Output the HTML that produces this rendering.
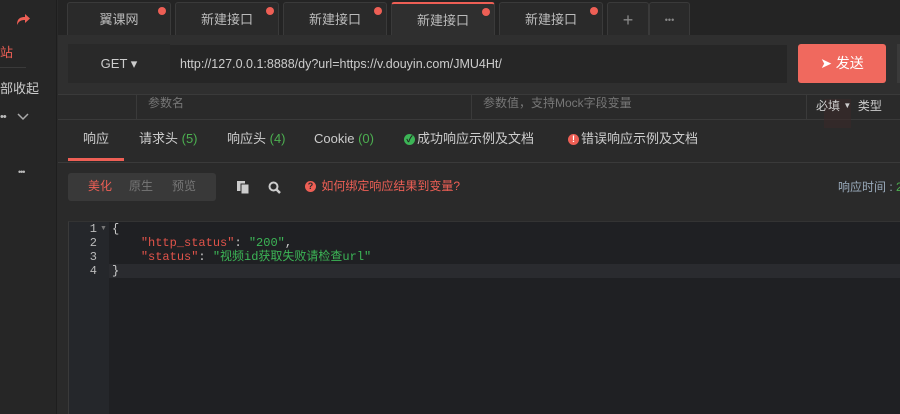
<!DOCTYPE html>
<html><head><meta charset="utf-8"><style>
*{margin:0;padding:0;box-sizing:border-box}
body{width:900px;height:414px;overflow:hidden;background:#2a2a2a;font-family:"Liberation Sans","Noto Sans CJK SC",sans-serif;font-size:13px;color:#ccc;position:relative}
.a{position:absolute;line-height:16px;white-space:nowrap}
.side{left:0;top:0;width:57px;height:414px;background:#262626;border-right:1px solid #1e1e1e}
.tabbar{left:58px;top:0;width:842px;height:35px;background:#242424}
.tab{position:absolute;top:2px;height:34px;background:#2a2a2a;border:1px solid #3a3a3a;border-bottom:none;border-radius:3px 3px 0 0;text-align:center;line-height:34px;color:#bbb;font-size:13px}
.dot{position:absolute;right:4px;top:4px;width:8px;height:8px;border-radius:50%;background:#ee5f55}
.mono{font-family:"Liberation Mono","Noto Sans CJK SC",monospace;font-size:12px}
.ic{display:inline-block;width:11px;height:11px;border-radius:50%;font-size:9px;line-height:11px;text-align:center;font-weight:bold;vertical-align:middle;margin-right:2px}
</style></head><body>
<div class="a side"></div>
<svg class="a" style="left:15px;top:12px" width="16" height="14" viewBox="0 0 16 14"><path d="M2 13 C2 6 6 5 10 5 L10 2 L15 6.5 L10 11 L10 8 C6 8 4 9 2 13Z" fill="#ee5f55"/></svg>
<div class="a" style="left:0;top:45px;color:#ee5f55;font-size:13px">站</div>
<div class="a" style="left:0;top:67px;width:26px;height:1px;background:#3a3a3a"></div>
<div class="a" style="left:0;top:81px;color:#ccc;font-size:13px">部收起</div>
<div class="a" style="left:0;top:109px;color:#bbb;font-size:11px;letter-spacing:-1px">••</div>
<svg class="a" style="left:17px;top:113px" width="12" height="8"><path d="M1 1 L6 6 L11 1" stroke="#aaa" stroke-width="1.5" fill="none"/></svg>
<div class="a" style="left:18px;top:164px;color:#bbb;font-size:9px;letter-spacing:-1px">•••</div>

<div class="a tabbar"></div>
<div class="tab" style="left:67px;width:104px">翼课网<span class="dot"></span></div>
<div class="tab" style="left:175px;width:104px">新建接口<span class="dot"></span></div>
<div class="tab" style="left:283px;width:104px">新建接口<span class="dot"></span></div>
<div class="tab" style="left:391px;width:104px;background:#2f2f2f;border-top:2px solid #ee5f55;height:34px">新建接口<span class="dot"></span></div>
<div class="tab" style="left:499px;width:104px">新建接口<span class="dot"></span></div>
<div class="tab" style="left:607px;width:42px;font-size:18px;color:#888">+</div>
<div class="tab" style="left:649px;width:41px;color:#888;font-size:9px">•••</div>

<div class="a" style="left:58px;top:35px;width:842px;height:60px;background:#2f2f2f"></div>
<div class="a" style="left:68px;top:44px;width:102px;height:39px;background:#292929;color:#ccc;line-height:39px;text-align:center;font-size:13px">GET ▾</div>
<div class="a" style="left:170px;top:45px;width:617px;height:38px;background:#262626;color:#ccc;line-height:38px;padding-left:10px;font-size:12.5px">http://127.0.0.1:8888/dy?url=https://v.douyin.com/JMU4Ht/</div>
<div class="a" style="left:798px;top:44px;width:88px;height:39px;background:#f0695e;border-radius:3px;color:#fff;line-height:39px;text-align:center;font-size:14px">➤ 发送</div>
<div class="a" style="left:897px;top:44px;width:3px;height:39px;background:#3a3a3a"></div>

<div class="a" style="left:58px;top:94px;width:842px;height:1px;background:#3a3a3a"></div>
<div class="a" style="left:58px;top:119px;width:842px;height:1px;background:#3a3a3a"></div>
<div class="a" style="left:136px;top:95px;width:1px;height:24px;background:#3a3a3a"></div>
<div class="a" style="left:471px;top:95px;width:1px;height:24px;background:#3a3a3a"></div>
<div class="a" style="left:806px;top:95px;width:1px;height:24px;background:#3a3a3a"></div>
<div class="a" style="left:824px;top:99px;width:27px;height:29px;background:#3a2a2a;opacity:.6"></div>
<div class="a" style="left:148px;top:95px;color:#777;font-size:12px">参数名</div>
<div class="a" style="left:483px;top:95px;color:#777;font-size:12px">参数值，支持Mock字段变量</div>
<div class="a" style="left:816px;top:98px;color:#ccc;font-size:12px">必填 <span style="font-size:8px;vertical-align:top">▼</span> &nbsp;类型</div>

<div class="a" style="left:83px;top:131px;color:#ccc">响应</div>
<div class="a" style="left:68px;top:158px;width:56px;height:3px;background:#ee5f55"></div>
<div class="a" style="left:139px;top:131px;color:#ccc">请求头 <span style="color:#4caf50">(5)</span></div>
<div class="a" style="left:227px;top:131px;color:#ccc">响应头 <span style="color:#4caf50">(4)</span></div>
<div class="a" style="left:314px;top:131px;color:#ccc">Cookie <span style="color:#4caf50">(0)</span></div>
<div class="a" style="left:404px;top:131px;color:#ccc"><span class="ic" style="background:#3cb556;color:#222">✓</span>成功响应示例及文档</div>
<div class="a" style="left:568px;top:131px;color:#ccc"><span class="ic" style="background:#ee5f55;color:#fff">!</span>错误响应示例及文档</div>
<div class="a" style="left:58px;top:162px;width:842px;height:1px;background:#3a3a3a"></div>

<div class="a" style="left:68px;top:173px;width:148px;height:28px;background:#393939;border-radius:3px"></div>
<div class="a" style="left:88px;top:178px;color:#ee5f55;font-size:12px">美化</div>
<div class="a" style="left:129px;top:178px;color:#777;font-size:12px">原生</div>
<div class="a" style="left:172px;top:178px;color:#777;font-size:12px">预览</div>
<svg class="a" style="left:236px;top:180px" width="14" height="14"><rect x="1" y="1" width="8" height="10" fill="#ccc"/><rect x="5" y="4" width="8" height="10" fill="#ccc" stroke="#2a2a2a"/></svg>
<svg class="a" style="left:268px;top:181px" width="14" height="14"><circle cx="5.5" cy="5.5" r="4" stroke="#ccc" stroke-width="2" fill="none"/><path d="M8.5 8.5 L12 12" stroke="#ccc" stroke-width="2.5"/></svg>
<div class="a" style="left:305px;top:178px;color:#ee5f55;font-size:12px"><span class="ic" style="background:#ee5f55;color:#2a2a2a">?</span> 如何绑定响应结果到变量?</div>
<div class="a" style="left:838px;top:179px;color:#9ab;font-size:12px">响应时间 : <span style="color:#4caf50">2</span></div>

<div class="a" style="left:68px;top:221px;width:832px;height:193px;background:#1f2023;border-left:1px solid #3a3a3a;border-top:1px solid #333"></div>
<div class="a" style="left:69px;top:222px;width:40px;height:192px;background:#25272b"></div>
<div class="a" style="left:109px;top:264px;width:791px;height:14px;background:#2a2b2f"></div>
<div class="a mono" style="left:69px;top:222px;width:28px;text-align:right;color:#bbb;line-height:14px">1<br>2<br>3<br>4</div>
<div class="a" style="left:100px;top:221px;color:#777;font-size:7px">▼</div>
<div class="a mono" style="left:112px;top:222px;line-height:14px;color:#ccc;white-space:pre">{
    <span style="color:#e0534a">"http_status"</span>: <span style="color:#3cb556">"200"</span>,
    <span style="color:#e0534a">"status"</span>: <span style="color:#3cb556">"视频id获取失败请检查url"</span>
}</div>
</body></html>
